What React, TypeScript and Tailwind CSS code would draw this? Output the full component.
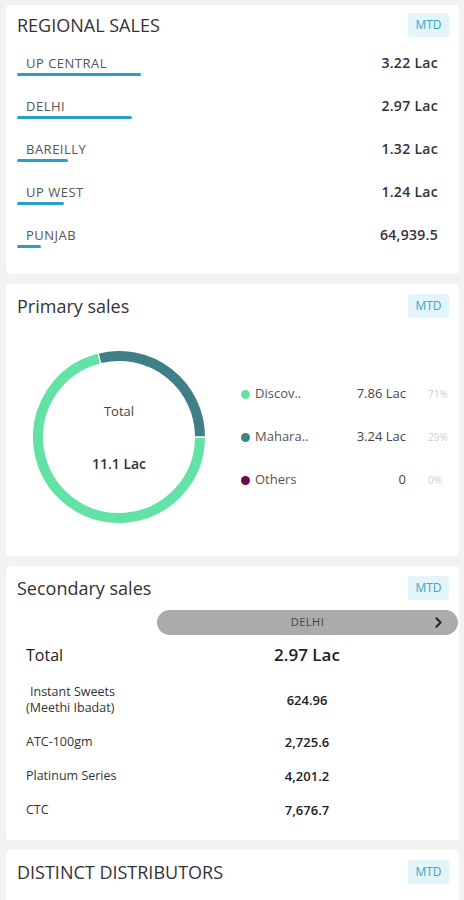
import { ChevronRight } from "lucide-react";

const regions = [
  { name: "UP CENTRAL", value: "3.22 Lac", bar: 124 },
  { name: "DELHI", value: "2.97 Lac", bar: 115 },
  { name: "BAREILLY", value: "1.32 Lac", bar: 51 },
  { name: "UP WEST", value: "1.24 Lac", bar: 47 },
  { name: "PUNJAB", value: "64,939.5", bar: 24 },
];

const legend = [
  { label: "Discov..", value: "7.86 Lac", pct: "71%", color: "bg-[#62e3a3]" },
  { label: "Mahara..", value: "3.24 Lac", pct: "29%", color: "bg-[#3f8087]" },
  { label: "Others", value: "0", pct: "0%", color: "bg-[#6a0a55]" },
];

const products = [
  { name: ["Instant Sweets", "(Meethi Ibadat)"], value: "624.96" },
  { name: ["ATC-100gm"], value: "2,725.6" },
  { name: ["Platinum Series"], value: "4,201.2" },
  { name: ["CTC"], value: "7,676.7" },
];

function CardHeader({ title }: { title: string }) {
  return (
    <div className="flex h-[24px] items-center justify-between pl-[11px] pr-[10px]">
      <span className="text-[18px] text-[#333]">{title}</span>
      <span className="flex h-[24px] w-[41px] items-center justify-center rounded-[3px] bg-[#e3f5fa] text-[12px] text-[#3aa5c4]">
        MTD
      </span>
    </div>
  );
}

// angle in degrees, clockwise from 12 o'clock
function arc(cx: number, cy: number, r: number, from: number, to: number) {
  const p = (a: number) => {
    const rad = (a * Math.PI) / 180;
    return `${(cx + r * Math.sin(rad)).toFixed(2)} ${(cy - r * Math.cos(rad)).toFixed(2)}`;
  };
  const large = to - from > 180 ? 1 : 0;
  return `M ${p(from)} A ${r} ${r} 0 ${large} 1 ${p(to)}`;
}

function Donut() {
  return (
    <div className="relative h-[172px] w-[172px] shrink-0">
      <svg width="172" height="172" viewBox="0 0 172 172">
        <path d={arc(86, 86, 81, -13.5, 89.5)} fill="none" stroke="#3f8087" strokeWidth="10" />
        <path d={arc(86, 86, 81, 90.5, 345.5)} fill="none" stroke="#62e3a3" strokeWidth="10" />
      </svg>
      <div className="absolute left-0 top-[51px] w-full text-center text-[13px] text-[#444]">Total</div>
      <div className="absolute left-0 top-[102px] w-full text-center text-[14px] font-semibold text-[#333]">
        11.1 Lac
      </div>
    </div>
  );
}

export default function App() {
  return (
    <div
      className="flex min-h-screen w-full flex-col gap-[10px] bg-[#f2f2f2] pb-4 pl-[6px] pr-[5px] pt-[5px]"
      style={{ fontFamily: '"Open Sans", "Liberation Sans", sans-serif' }}
    >
      {/* regional sales */}
      <section className="rounded-[4px] bg-white pb-[16px] pt-2">
        <CardHeader title="REGIONAL SALES" />
        <div className="mt-[6px]">
          {regions.map((r) => (
            <div key={r.name} className="flex h-[43px] items-start justify-between pl-[11px] pr-[21px] pt-[12px]">
              <div className="flex flex-col">
                <span className="pl-[9px] text-[13px] leading-[16px] tracking-[0.5px] text-[#555]">{r.name}</span>
                <span className="mt-[2px] h-[3px] rounded-full bg-[#2aa0c6]" style={{ width: r.bar }} />
              </div>
              <span className="text-[14px] font-semibold leading-[16px] tracking-[0.3px] text-[#333]">{r.value}</span>
            </div>
          ))}
        </div>
      </section>

      {/* primary sales */}
      <section className="rounded-[4px] bg-white pb-[33px] pt-[10px]">
        <CardHeader title="Primary sales" />
        <div className="mt-[33px] flex items-center pl-[27px]">
          <Donut />
          <div className="ml-[36px] flex w-[208px] flex-col">
            {legend.map((l) => (
              <div key={l.label} className="flex h-[43px] items-center">
                <span className={`h-[9px] w-[9px] shrink-0 rounded-full ${l.color}`} />
                <span className="ml-[5px] flex-1 text-[13px] text-[#555]">{l.label}</span>
                <span className="text-[13px] text-[#444]">{l.value}</span>
                <span className="w-[43px] pl-[22px] text-[10px] text-[#cfcfcf]">{l.pct}</span>
              </div>
            ))}
          </div>
        </div>
      </section>

      {/* secondary sales */}
      <section className="rounded-[4px] bg-white pb-[13px] pt-[10px]">
        <CardHeader title="Secondary sales" />
        <div className="relative ml-[151px] mr-[1px] mt-[10px] flex h-[25px] items-center justify-center rounded-full bg-[#ababab]">
          <span className="text-[11px] tracking-[0.5px] text-[#444]">DELHI</span>
          <ChevronRight className="absolute right-[11px] top-[4px] h-[17px] w-[17px] text-[#1f1f1f]" strokeWidth={2.6} />
        </div>
        <div className="flex h-[40px] items-center pl-[20px]">
          <span className="w-[210px] text-[16px] text-[#222]">Total</span>
          <span className="w-[142px] text-center text-[17px] font-semibold text-[#222]">2.97 Lac</span>
        </div>
        {products.map((p) => (
          <div key={p.value} className="flex items-center py-[9px] pl-[20px]">
            <div className="flex w-[210px] flex-col text-[12.5px] leading-[16px] text-[#333]">
              {p.name.map((n, i) => (
                <span key={n} className={i === 0 && p.name.length > 1 ? "pl-[4px]" : ""}>
                  {n}
                </span>
              ))}
            </div>
            <span className="w-[142px] text-center text-[13px] font-semibold leading-[16px] text-[#222]">{p.value}</span>
          </div>
        ))}
      </section>

      {/* distinct distributors */}
      <section className="h-[80px] rounded-[4px] bg-white pt-[10px]">
        <CardHeader title="DISTINCT DISTRIBUTORS" />
      </section>
    </div>
  );
}
